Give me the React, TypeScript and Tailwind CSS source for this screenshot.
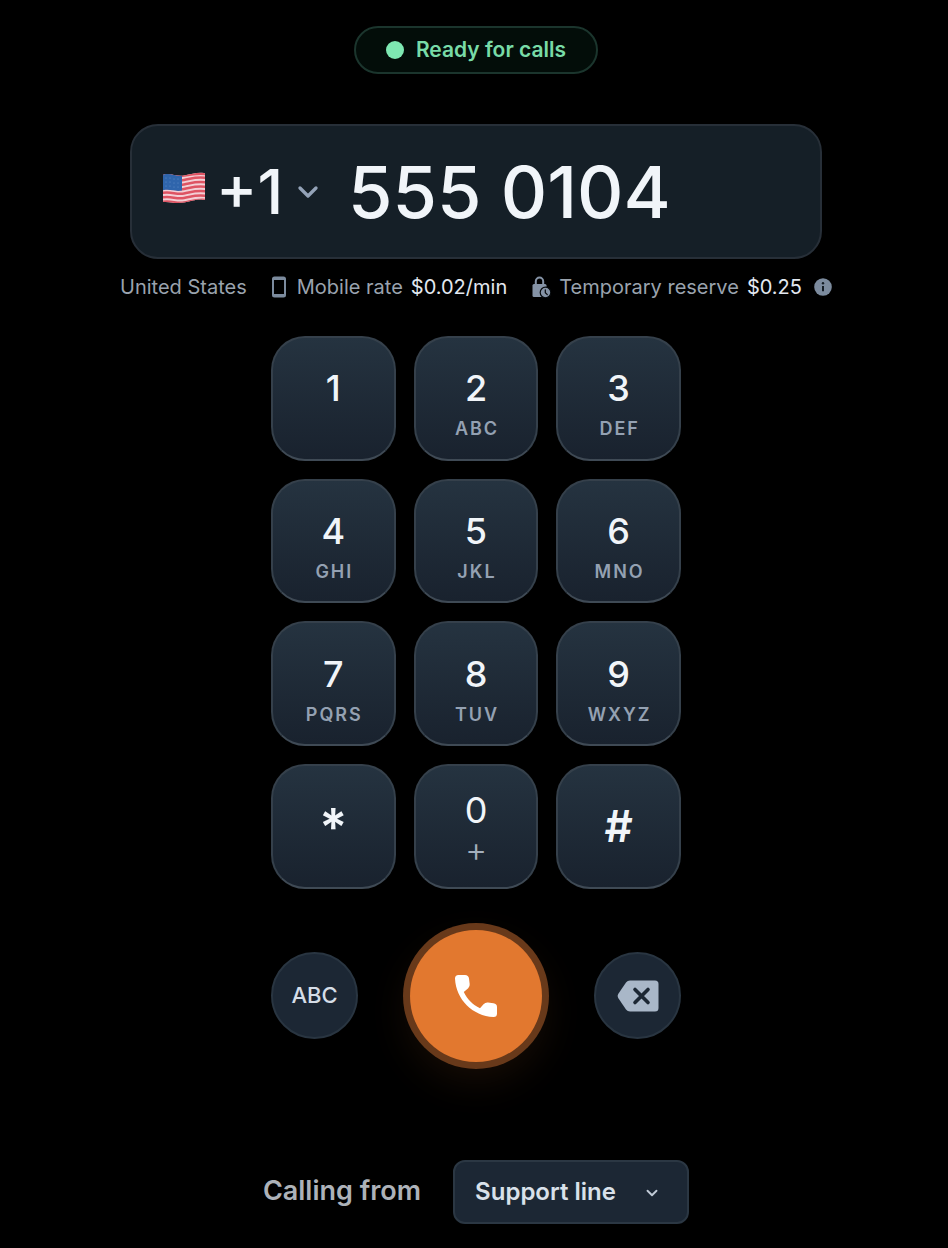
import { useState } from "react";
import { ChevronDown } from "lucide-react";

const KEYS = [
  { digit: "1", letters: "" },
  { digit: "2", letters: "ABC" },
  { digit: "3", letters: "DEF" },
  { digit: "4", letters: "GHI" },
  { digit: "5", letters: "JKL" },
  { digit: "6", letters: "MNO" },
  { digit: "7", letters: "PQRS" },
  { digit: "8", letters: "TUV" },
  { digit: "9", letters: "WXYZ" },
  { digit: "*" },
  { digit: "0", letters: "+" },
  { digit: "#" },
];

function UsFlag() {
  return (
    <svg viewBox="0 0 44 34" className="w-11 h-[34px] mb-2 shrink-0" aria-hidden="true">
      <defs>
        <clipPath id="flag-wave">
          <path d="M1 4.500Q1 3.500 2 3.500C9 1.500 14 6 22 4.500C30 3 35 1 42 2Q43 2 43 3V28Q43 29 42 29C35 27.500 31 30 22 31.500C13 33 8 30.500 2 31Q1 31 1 30Z" />
        </clipPath>
      </defs>
      <g clipPath="url(#flag-wave)">
        <rect width="44" height="34" fill="#f3d0d6" />
        <g fill="none" stroke="#de5463" strokeWidth="2.500">
          <path d="M0 4C9 2 14 6 22 4.500S35 2 44 3" />
          <path d="M0 8.500C9 6.500 14 10.500 22 9S35 5.500 44 7" />
          <path d="M0 13C9 11 14 15 22 13.500S35 10 44 11.500" />
          <path d="M0 17.500C9 15.500 14 19.500 22 18S35 14.500 44 16" />
          <path d="M0 22C9 20 14 24 22 22.500S35 19 44 20.500" />
          <path d="M0 26.500C9 24.500 14 28.500 22 27S35 23.500 44 25" />
          <path d="M0 31C9 29 14 33 22 31.500S35 28 44 29" />
        </g>
        <path d="M0 2C8 1 14 6 20 4.500V19.500C13 21 8 17.500 0 19.500Z" fill="#2f65ac" />
        <g fill="#6f97cd">
          <circle cx="4" cy="7" r="0.500" />
          <circle cx="8" cy="7" r="0.500" />
          <circle cx="12" cy="8" r="0.500" />
          <circle cx="16" cy="8" r="0.500" />
          <circle cx="4" cy="11" r="0.500" />
          <circle cx="8" cy="11" r="0.500" />
          <circle cx="12" cy="12" r="0.500" />
          <circle cx="16" cy="12" r="0.500" />
          <circle cx="4" cy="15" r="0.500" />
          <circle cx="8" cy="15" r="0.500" />
          <circle cx="12" cy="16" r="0.500" />
          <circle cx="16" cy="16" r="0.500" />
        </g>
      </g>
    </svg>
  );
}

function MobileIcon() {
  return (
    <svg viewBox="0 0 16 22" className="w-4 h-[22px] ml-6 mr-[10px] text-[#7c8b9e]" fill="currentColor" aria-hidden="true">
      <path fillRule="evenodd" d="M3.500 0.500h9a2.500 2.500 0 0 1 2.500 2.500v16a2.500 2.500 0 0 1-2.500 2.500h-9A2.500 2.500 0 0 1 1 19V3A2.500 2.500 0 0 1 3.500 0.500ZM3 4v14h10V4Z" />
    </svg>
  );
}

function LockClockIcon() {
  return (
    <svg viewBox="0 0 20 22" className="w-5 h-[22px] ml-6 mr-2" aria-hidden="true">
      <path d="M4.800 9V5.200a3.700 3.700 0 0 1 7.400 0V9" fill="none" stroke="#8593a6" strokeWidth="2" />
      <rect x="1.500" y="8" width="14" height="13" rx="1.500" fill="#8593a6" />
      <circle cx="14.500" cy="16.500" r="5.300" fill="#8593a6" stroke="#06090c" strokeWidth="1.200" />
      <path d="M14.300 13.800v2.900l2 2" fill="none" stroke="#06090c" strokeWidth="1.200" strokeLinecap="round" />
    </svg>
  );
}

function InfoIcon() {
  return (
    <svg viewBox="0 0 18 18" className="size-[18px]" aria-hidden="true">
      <circle cx="9" cy="9" r="8.800" fill="#7c8b9e" />
      <circle cx="9" cy="5.200" r="1.200" fill="#141c24" />
      <path d="M9 8v5.300" stroke="#141c24" strokeWidth="2" />
    </svg>
  );
}

function CallIcon() {
  return (
    <svg viewBox="0 0 44 44" className="size-11" fill="currentColor" aria-hidden="true">
      <path d="M4.500 1H11Q14.500 1 15 4.500L15.700 10Q16 12.500 14.200 14.200L9.800 18C13.500 25.500 18.500 30.500 26 34.200L29.500 30.200Q31.500 28.200 34 28.500L39.500 29.200Q43 29.800 43 33V39.500Q43 43 39.500 43C18.500 42 2 25.500 1 4.500Q1 1 4.500 1Z" />
    </svg>
  );
}

function BackspaceIcon() {
  return (
    <svg viewBox="0 0 42 32" className="w-[42px] h-8" aria-hidden="true">
      <path d="M13 0.500H38Q41.500 0.500 41.500 4V28Q41.500 31.500 38 31.500H13Q10.500 31.500 9 29.500L1.200 18Q0 16 1.200 14L9 2.500Q10.500 0.500 13 0.500Z" fill="#a9b7c8" />
      <path d="M18 9.500 31 22.500M31 9.500 18 22.500" stroke="#1c2734" strokeWidth="3.600" strokeLinecap="round" />
    </svg>
  );
}

function KeyLabel({ digit, letters }: { digit: string; letters?: string }) {
  if (digit === "*") {
    return <span className="text-[52px] leading-[52px] font-semibold pt-1">*</span>;
  }
  if (digit === "#") {
    return <span className="text-[44px] leading-[44px] font-semibold">#</span>;
  }
  if (digit === "0") {
    return (
      <>
        <span className="text-[36px] leading-10 pt-4">0</span>
        <span className="text-[34px] leading-10 h-12 text-[#a3afbd] font-light">{letters}</span>
      </>
    );
  }
  return (
    <>
      <span className="text-[36px] leading-10 font-medium pt-5">{digit}</span>
      <span className="text-[18px] leading-[42px] h-10 pl-[2px] font-semibold tracking-[2px] text-[#94a1b2]">{letters}</span>
    </>
  );
}

export default function App() {
  const [number, setNumber] = useState("555 0104");

  return (
    <main className="min-h-screen bg-black text-[#f1f5f9] font-['Inter','Liberation_Sans',sans-serif] flex flex-col items-center pl-1 pt-[26px] pb-6">
      <div className="h-12 flex items-center gap-3 rounded-full border-2 border-[#1b352d] bg-[#030d09] px-[30px] text-[21px] font-semibold text-[#78dba7]">
        <span className="w-[18px] h-[18px] rounded-full bg-[#7ee8b2]" />
        Ready for calls
      </div>

      {/* Number entry */}
      <div className="mt-[50px] w-full max-w-[692px] h-[135px] flex items-center rounded-[28px] border-2 border-[#272f38] bg-[#151f27] pl-[30px] pr-8">
        <UsFlag />
        <div className="relative ml-[10px] shrink-0">
          <select
            aria-label="Country code"
            className="appearance-none bg-transparent w-[104px] h-20 text-[62px] leading-[80px] font-medium outline-none"
          >
            <option>+1</option>
          </select>
          <ChevronDown className="absolute -right-1 top-6 size-8 text-[#94a3b8] pointer-events-none" strokeWidth={2.5} />
        </div>
        <input
          type="tel"
          aria-label="Phone number"
          value={number}
          onChange={(e) => setNumber(e.target.value)}
          className="ml-7 min-w-0 flex-1 h-24 bg-transparent text-[72px] font-medium outline-none"
        />
      </div>

      {/* Rate info */}
      <div className="mt-3 h-8 flex items-center whitespace-nowrap text-xl text-[#9aa3ae]">
        <span>United States</span>
        <MobileIcon />
        <span>Mobile rate</span>
        <span className="ml-2 text-[#e2e8f0]">$0.02/min</span>
        <LockClockIcon />
        <span>Temporary reserve</span>
        <span className="ml-2 mr-3 text-[#e2e8f0]">$0.25</span>
        <InfoIcon />
      </div>

      {/* Keypad */}
      <div className="mt-[33px] w-[410px] grid grid-cols-3 gap-[18px]">
        {KEYS.map((key) => (
          <button
            key={key.digit}
            onClick={() => setNumber(number + key.digit)}
            className="aspect-square flex flex-col items-center justify-center rounded-[34px] border-2 border-[#35404b] border-b-[#3f4a55] bg-linear-to-b from-[#253340] to-[#19222e]"
          >
            <KeyLabel digit={key.digit} letters={key.letters} />
          </button>
        ))}
      </div>

      {/* Call controls */}
      <div className="mt-[41px] w-[410px] flex items-center justify-between">
        <button className="w-[87px] h-[87px] rounded-full border-2 border-[#293541] bg-[#1c2734] text-[22px] font-medium text-[#d5dde7]">
          ABC
        </button>
        <button
          aria-label="Call"
          className="w-[132px] h-[132px] flex items-center justify-center rounded-full bg-[#e2782f] text-white shadow-[0_0_0_7px_#68391a,0_16px_44px_rgba(226,120,47,0.12)]"
        >
          <CallIcon />
        </button>
        <button
          aria-label="Delete digit"
          onClick={() => setNumber(number.slice(0, -1))}
          className="w-[87px] h-[87px] flex items-center justify-center rounded-full border-2 border-[#293541] bg-[#1c2734]"
        >
          <BackspaceIcon />
        </button>
      </div>

      <div className="mt-[98px] flex items-center gap-8">
        <label htmlFor="caller-id" className="text-[27px] font-semibold text-[#adb2b9]">
          Calling from
        </label>
        <div className="relative">
          <select
            id="caller-id"
            className="appearance-none w-[236px] h-16 rounded-xl border-2 border-[#2b3743] bg-[#1c2734] pl-5 text-2xl font-semibold text-[#d9e1ea] outline-none"
          >
            <option>Support line</option>
          </select>
          <ChevronDown className="absolute right-7 top-6 size-[18px] text-[#c0cad6] pointer-events-none" strokeWidth={2.5} />
        </div>
      </div>
    </main>
  );
}
